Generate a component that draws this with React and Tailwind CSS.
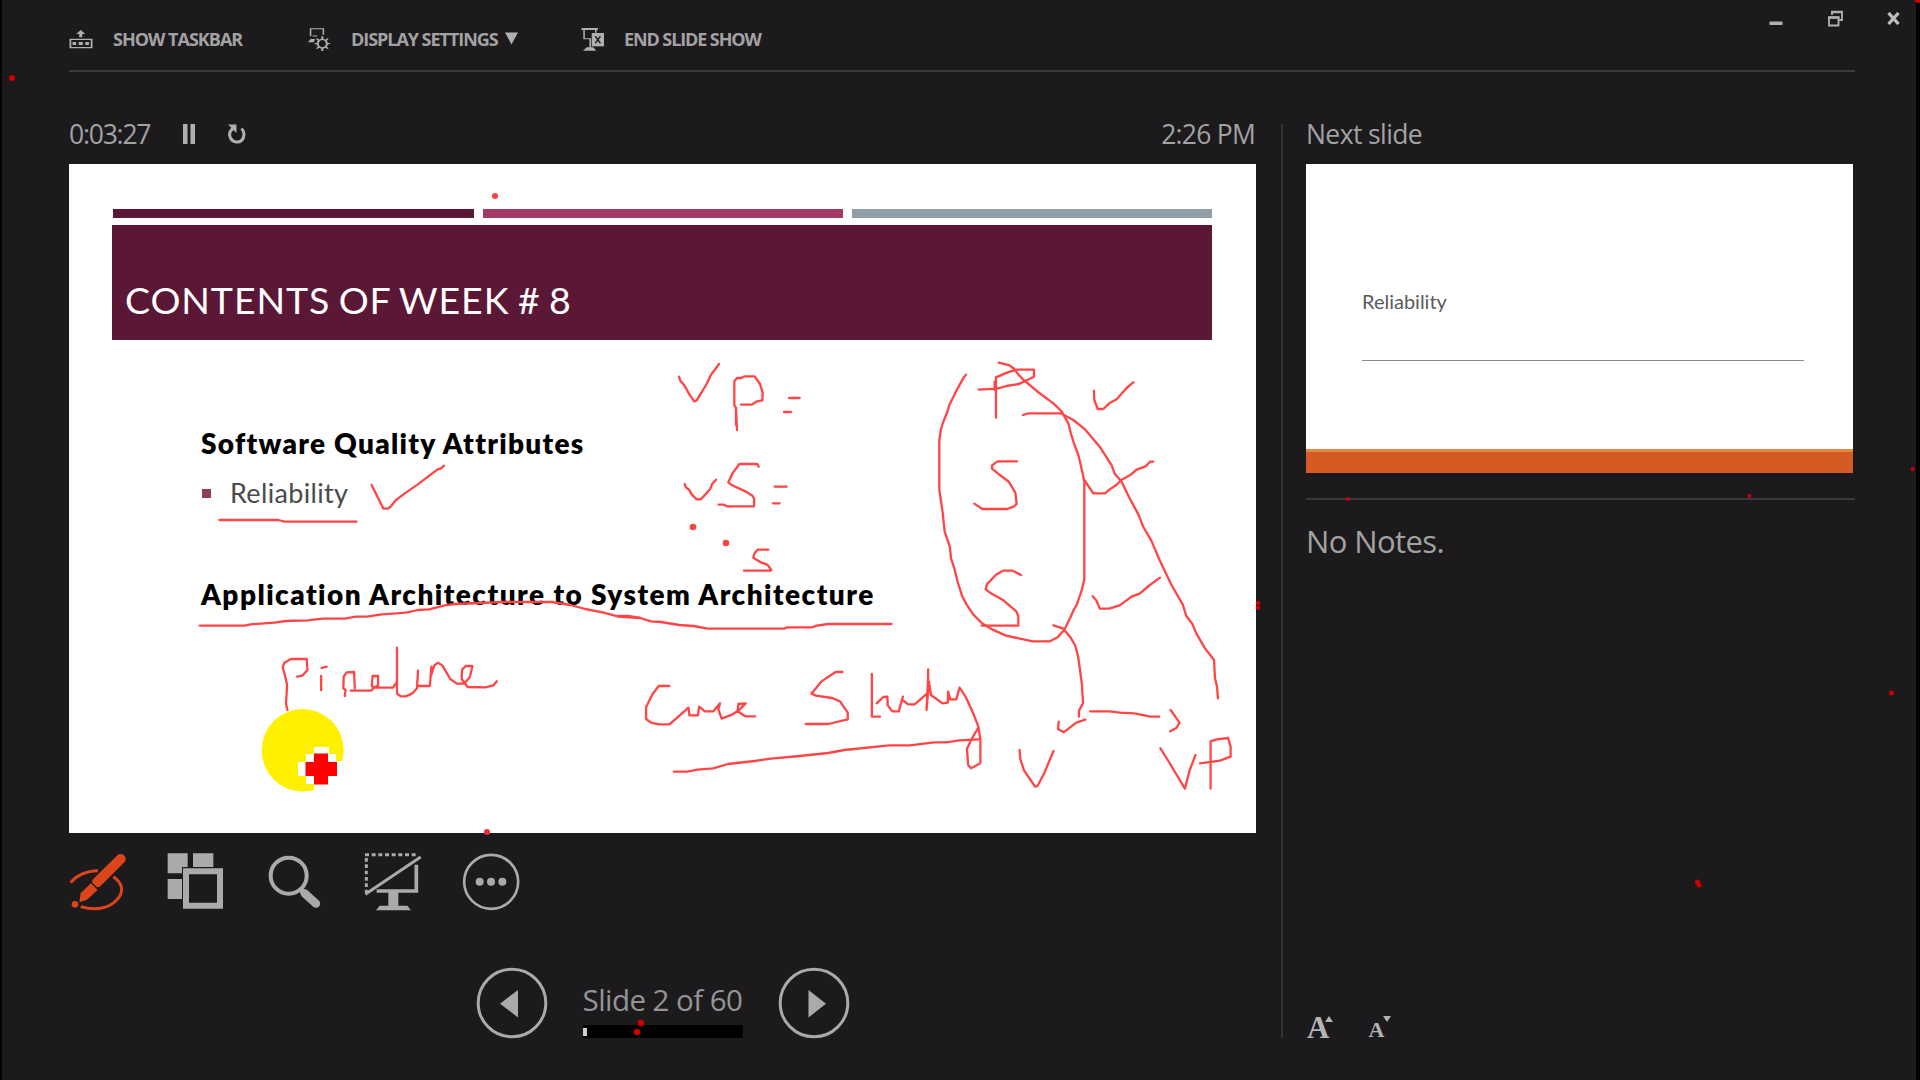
const RED = '#ff4545';

function Ink() {
  const g = {
    fill: 'none',
    stroke: RED,
    strokeWidth: 2.3,
    strokeLinecap: 'round',
    strokeLinejoin: 'round',
  };
  const v = { vectorEffect: 'non-scaling-stroke' };
  return (
    <svg className="pointer-events-none absolute left-0 top-0" width="1920" height="1080" viewBox="0 0 1920 1080">
      {/* tick and underline beside the first bullet */}
      <g {...g} transform="translate(60 160) scale(.39541 .33333)">
        <path {...v} d="M403 1080H552L568 1085H750M788 975L818 1046H828L836 1040L848 1022L872 1000L905 973L955 928L963 926L971 917" />
      </g>
      {/* centre column */}
      <g {...g} transform="translate(640 340) scale(.33333)">
        <path {...v} d="M117 110L121 122L133 136L150 166L163 184L170 181L181 163L200 132L213 104L221 94L237 72" />
        <path {...v} d="M303 194H335L351 184L367 181L368 158L360 132L344 109H314L304 114H291L283 124V196L288 203V255M288 203L291 270M447 174H479M432 216H453" />
        <path {...v} d="M134 432L138 442L148 450L155 463L170 478H182L190 470L211 446L216 433L228 419M356 380L352 372H298L277 401L265 427L275 435L316 454L338 468L343 478L342 499H260L252 494H236M404 440H440M399 490H419" />
        <path {...v} d="M385 629H353L344 639L340 653L362 667L382 674L394 690L392 692H312" />
      </g>
      {/* right column with the encircled letters */}
      <g {...g} transform="translate(900 340) scale(.33333)">
        <path {...v} d="M198 104L191 113L173 145L157 177L147 197L143 213L131 243L123 267L118 300V450L128 517L134 575L150 622L153 655L163 685L174 729L186 767L200 794L220 824L245 849L278 869L318 887L360 896L398 904H450L473 892L493 869L510 835L522 808L530 795L546 748L553 718V424L545 387L535 345L522 310L513 282L506 253L494 230L484 213L460 190L414 156L370 119L353 101L343 87L329 76L296 68" />
        <path {...v} d="M288 233V112L323 97L350 89H402V110L357 132L319 138L292 146L236 149M284 125V150" />
        <path {...v} d="M369 225L385 220H482L520 240L556 269L599 320L635 376L644 401L664 424L689 475L715 523L730 561L754 602L780 663L813 732L848 793L859 828L877 852L889 880L915 925L942 960L945 1015L951 1040L954 1075" />
        <path {...v} d="M582 153L583 180L593 207H610L628 190L650 178L680 144L700 127M553 420L580 460H615L628 449L649 435L664 420L691 405L710 389L737 379L750 365H760M578 769L588 780L600 806H628L659 796L695 770L720 760L746 738L780 713" />
        <path {...v} d="M351 364H293L276 376V386L297 403L327 426L346 458L350 492L341 500L321 507H247L223 491M363 705L338 692H309L288 704L261 733L257 748L273 760L310 781L349 814L355 829V857H245" />
        <path {...v} d="M460 856L490 866L510 890L525 915L534 948L540 990L546 1035L549 1090L537 1112V1130" />
      </g>
      {/* underline below the second heading and "Pipeline" */}
      <g {...g} transform="translate(60 560) scale(.36990 .33333)">
        <path {...v} d="M378 197H500L515 193L580 188L610 183L670 181L710 176H770L800 170H830L870 163L910 160L940 157L967 150L998 148L1040 136L1068 132L1200 126H1330L1380 135L1420 147L1470 158L1510 170L1566 174" />
        <path {...v} d="M615 450L611 432L614 375L608 345L602 322L606 309L624 297H667L669 330L655 347L641 350M707 324L721 320M706 348V391M770 408L772 390L766 385L767 350L775 337L795 336L797 385M786 392H842L847 384L860 376V348H845L843 378L850 383H900L908 370M911 263V400L921 409H935L953 400L965 385L968 332M968 378H1000L1004 320M1002 350L1012 316L1022 308L1034 317L1055 357L1073 371H1092L1108 352L1115 318H1097L1087 329L1086 357L1102 381L1150 382L1172 376L1181 364" />
      </g>
      {/* "Case Study", the arrows and the lower labels */}
      <g {...g} transform="translate(620 560) scale(.40816 .33333)">
        <path {...v} d="M-4 168H20L50 174L75 184L100 186L145 195L180 198L215 206H402L410 202H470L482 197L510 192H665" />
        <path {...v} d="M121 378H95L80 402L64 441V477L75 487L94 493H121L140 473L168 443L170 466H191L194 440L208 454H229L245 430L241 448L249 476L276 463L292 450L308 430L290 432L288 454L307 469H331" />
        <path {...v} d="M545 336H528L493 365L469 401L480 407L520 414L539 424L558 458V478L510 492H455M617 342V470H637M629 430L645 411L655 410L656 436L667 454H683L693 410M692 420L706 433H722L752 401M755 328V352L751 450L757 365L762 405L790 430L803 428L804 395L809 418H824L832 383L848 413L866 462L878 500L883 540V610L860 625L853 615L850 566L862 536L878 503" />
        <path {...v} d="M132 635H165L190 629L228 625L265 612L330 603L370 596L440 588L510 579L550 570L660 556H710L770 547H800L830 541L878 538" />
        <path {...v} d="M1152 454H1200L1225 458L1260 460L1300 470H1321M1349 450L1371 488L1363 504L1348 514M1075 485L1073 507L1087 517L1118 488L1140 479M979 570L981 598L990 632L1006 660L1017 680L1023 678L1040 638L1062 573M1324 565L1345 606L1384 686L1396 630L1410 585M1447 686V544L1462 538L1490 534L1496 560V590L1470 602L1421 610" />
      </g>
    </svg>
  );
}

const DOTS = [
  [12, 78, 6, '#cc0000'], [495, 196, 6, '#ff4040'], [693, 527, 6.5, '#ff4040'], [726, 543, 6.5, '#ff4040'],
  [487, 832, 6, '#f03030'], [641, 1023, 6.5, '#cc0000'], [637, 1032, 6.5, '#cc0000'],
  [1348, 499, 4, '#cc0000'], [1749.5, 496, 4, '#cc0000'], [1912.8, 469, 4, '#cc0000'],
  [1258, 603, 4.5, '#cc0000'], [1258, 607.5, 4.5, '#cc0000'], [1891.5, 693, 5, '#cc0000'],
  [1697.4, 882, 5, '#cc0000'], [1699, 885, 5, '#cc0000'], [1918, 0, 6, '#cc0000'],
];

function Dots() {
  return (
    <svg className="pointer-events-none absolute left-0 top-0" width="1920" height="1080" viewBox="0 0 1920 1080">
      {DOTS.map(([x, y, d, c]) => (
        <circle key={`${x}-${y}`} cx={x} cy={y} r={d / 2} fill={c} />
      ))}
    </svg>
  );
}

function Pointer() {
  return (
    <svg className="absolute left-[192px] top-[544px]" width="86" height="86" viewBox="261 708 86 86">
      <ellipse cx="302.7" cy="750.3" rx="41" ry="41.3" fill="#fff000" />
      <path fill="#fff" d="M314 747H329V754H336V761H346V793H314V784H306V776H298V762H306V754H314Z" />
      <path fill="#f00" d="M314 753.5H328V762H337V776H328V784.5H314V776H305.500V762H314Z" />
    </svg>
  );
}

function TopBar() {
  return (
    <header className="flex h-[72px] w-[1786px] items-center border-b-2 border-[#3b393c] pt-[7px] text-[18px] font-bold leading-6 text-[#a3a2a3] whitespace-nowrap">
      <div className="flex w-[238px] items-center gap-[20px]">
        <svg width="24" height="24" viewBox="135 81 47 72" preserveAspectRatio="none" fill="#b0afb0">
          <path d="M158 90L167 102H161V112H155V102H149Z" />
          <path fillRule="evenodd" d="M136 116H181V145H136ZM139.500 120V141H177.500V120Z" />
          <path d="M142 126h7v9h-7zM154 126h8v9h-8zM167 126h7v9h-7z" />
        </svg>
        <span className="tracking-[-1px]">SHOW TASKBAR</span>
      </div>
      <div className="flex w-[274px] items-center">
        <svg width="24" height="24" viewBox="602 81 47 72" preserveAspectRatio="none" fill="none" stroke="#b0afb0">
          <path d="M609 109V86H634V104M622 108H613" strokeWidth="3" />
          <path d="M604 127L609 117H618L615 127Z" fill="#b0afb0" stroke="none" />
          <ellipse cx="632" cy="131" rx="9" ry="13" strokeWidth="4" />
          <path d="M632 109V118M632 144V153M617 131H623M641 131H647M621 116L626 122M638 140L643 146M643 116L638 122M626 140L621 146" strokeWidth="4" />
        </svg>
        <span className="ml-5 w-[154px] tracking-[-1.05px]">DISPLAY SETTINGS</span>
        <svg width="13" height="13" viewBox="0 0 13 13" fill="#b0afb0"><path d="M0 0.500H13L6.500 12.500Z" /></svg>
      </div>
      <div className="flex items-center gap-[19px]">
        <svg width="24" height="24" viewBox="1138 81 47 72" preserveAspectRatio="none" fill="#b0afb0">
          <path d="M1139 84H1171V90H1139Z" />
          <path d="M1144 90V116H1156V143M1167 90V98" fill="none" stroke="#b0afb0" strokeWidth="3" />
          <path d="M1159 99H1183V139H1159Z" />
          <path d="M1166 109L1176 130M1176 109L1166 130" stroke="#1c1a1d" strokeWidth="3" />
          <path d="M1142 152L1149 142H1162L1168 152Z" />
        </svg>
        <span className="tracking-[-1.1px]">END SLIDE SHOW</span>
      </div>
    </header>
  );
}

function WindowButtons() {
  return (
    <div className="absolute right-[20px] top-[10px] flex items-center gap-[43.500px]">
      <svg width="14" height="16" viewBox="0 0 14 16"><path d="M0.500 10.500H13.500V14H0.500Z" fill="#b0afb0" /></svg>
      <svg width="17" height="17" viewBox="0 0 17 17" fill="none" stroke="#b0afb0">
        <path d="M5 5V2H15V10H12" strokeWidth="1.8" /><path d="M4 2H16" strokeWidth="2.500" />
        <path d="M2 7.500H11.500V15.500H2Z" strokeWidth="1.8" /><path d="M1 7.500H12.500" strokeWidth="2.500" />
      </svg>
      <svg width="13" height="13" viewBox="0 0 13 13"><path d="M1.500 1L11.500 12M11.500 1L1.500 12" stroke="#bdbcbd" strokeWidth="3.300" /></svg>
    </div>
  );
}

function Slide() {
  return (
    <div className="relative flex h-[669px] w-[1187px] flex-col bg-white pl-[43px] pt-[45px] font-[Lato,sans-serif]">
      <div className="flex w-[1100px] justify-between pl-px">
        <div className="h-[9px] w-[361px] bg-[#5b1736]" />
        <div className="h-[9px] w-[360px] bg-[#a23a68]" />
        <div className="h-[9px] w-[360px] bg-[#919ea8]" />
      </div>
      <div className="mt-[7px] flex h-[115px] w-[1100px] items-end bg-[#5b1736] pb-[15px] pl-[13px]">
        <h1 className="whitespace-nowrap text-[37.5px] leading-[50px] tracking-[0.9px] text-white [word-spacing:-2px]">CONTENTS OF WEEK # 8</h1>
      </div>
      <h2 className="ml-[89px] mt-[83px] whitespace-nowrap text-[28px] font-extrabold leading-10 tracking-[1.28px] text-black">Software Quality Attributes</h2>
      <div className="ml-[90px] mt-[10px] flex items-center">
        <span className="h-[9px] w-[9px] bg-[#8b3d5e]" />
        <span className="ml-[19px] whitespace-nowrap text-[27px] leading-10 tracking-[0.33px] text-[#4a4a4a]">Reliability</span>
      </div>
      <h2 className="ml-[89px] mt-[61px] whitespace-nowrap text-[28px] font-extrabold leading-10 tracking-[1.45px] text-black">Application Architecture to System Architecture</h2>
      <Pointer />
    </div>
  );
}

function ToolIcons() {
  return (
    <div className="mt-[19px] flex h-[60px] items-start">
      <svg width="60" height="60" viewBox="57 66 180 180" fill="none" stroke="#dc4519">
        <path d="M62 158C78 138 108 122 144 122M190 140C220 160 222 188 200 210C178 234 138 244 92 230" strokeWidth="9" />
        <path d="M141 157L212 87" strokeWidth="30" strokeLinecap="round" />
        <path d="M124 158L145 178L110 210L88 217L92 190Z" fill="#dc4519" stroke="none" />
        <path d="M119 153L150 184" stroke="#1c1a1d" strokeWidth="4" />
        <circle cx="75" cy="223" r="10" fill="#dc4519" stroke="none" />
      </svg>
      <svg className="ml-[38px]" width="60" height="60" viewBox="351 66 180 180" fill="#aba9ab">
        <path d="M353 70H413V130H353ZM429 70H490V130H429ZM353 147H413V207H353Z" />
        <path d="M396 111H522V240H396Z" fill="#1c1a1d" />
        <path fillRule="evenodd" d="M399 115H519V236H399ZM417 133V218H501V133Z" />
      </svg>
      <svg className="ml-[40px]" width="60" height="60" viewBox="651 66 180 180" fill="none" stroke="#aba9ab">
        <circle cx="716" cy="137" r="54" strokeWidth="12" />
        <path d="M750 176L764 190" strokeWidth="17" />
        <path d="M764 190L798 221" strokeWidth="25" strokeLinecap="round" />
      </svg>
      <svg className="ml-[37px]" width="60" height="60" viewBox="942 66 180 180" fill="none" stroke="#aba9ab">
        <path d="M945 74H1100" strokeWidth="9" strokeDasharray="12 8" />
        <path d="M949 84V188" strokeWidth="9" strokeDasharray="11 8" />
        <path d="M946 193L1112 81" strokeWidth="9" />
        <path d="M1099 104V183H980" strokeWidth="11" />
        <path d="M1015 186H1045V227H1072L1083 241H978L989 227H1015Z" fill="#aba9ab" stroke="none" />
      </svg>
      <svg className="ml-[38px]" width="60" height="60" viewBox="1236 66 180 180" fill="#aba9ab">
        <circle cx="1323.500" cy="155.500" r="81" fill="none" stroke="#aba9ab" strokeWidth="8" />
        <circle cx="1289" cy="155" r="12" /><circle cx="1323" cy="155" r="12" /><circle cx="1357" cy="155" r="12" />
      </svg>
    </div>
  );
}

function NavButton({ next }) {
  return (
    <svg width="72" height="72" viewBox="0 0 72 72">
      <circle cx="36" cy="36" r="33.8" fill="none" stroke="#aba9ab" strokeWidth="3" />
      <path d={next ? 'M30.500 23V50.500L48 36.700Z' : 'M42 23V50.500L24 36.700Z'} fill="#aba9ab" />
    </svg>
  );
}

function Navigation() {
  return (
    <nav className="mt-[55px] flex justify-center">
      <NavButton />
      <div className="ml-[35px] mr-[35px] flex w-[160px] flex-col">
        <span className="mt-[12px] whitespace-nowrap text-[29.5px] leading-[42px] tracking-[-0.55px] text-[#959495]">Slide 2 of 60</span>
        <div className="mt-[4px] flex h-[13px] items-center bg-black">
          <div className="h-[8px] w-[4px] bg-[#d0d0d0]" />
        </div>
      </div>
      <NavButton next />
    </nav>
  );
}

export default function App() {
  return (
    <div className="relative h-[1080px] w-[1920px] overflow-hidden bg-black pl-[2px] font-['Open_Sans',sans-serif] text-[#a3a2a3]">
      <div className="flex h-full w-[1914px] flex-col bg-[#1c1a1d] pl-[67px]">
        <TopBar />
        <div className="flex">
          <main className="w-[1187px] pt-[32px]">
            <div className="flex h-[60px] items-center justify-between whitespace-nowrap text-[26.5px] leading-[36px]">
              <div className="flex items-center">
                <span className="w-[114px] tracking-[-1.2px]">0:03:27</span>
                <svg width="12" height="20" viewBox="0 0 12 20" fill="#b0afb0"><path d="M0 0H4.500V20H0ZM7.500 0H12V20H7.500Z" /></svg>
                <svg className="ml-[32px]" width="20" height="22" viewBox="0 0 20 22" fill="none" stroke="#b0afb0">
                  <path d="M14.500 5.500C18 9 17.500 15 14.500 17.500C11 20.500 5.500 19 3.500 15C2 12 2.500 8 6.500 5" strokeWidth="3" />
                  <path d="M1 1.500H9.500V10Z" fill="#b0afb0" stroke="none" />
                </svg>
              </div>
              <span className="mr-px tracking-[-0.75px]">2:26 PM</span>
            </div>
            <Slide />
            <ToolIcons />
            <Navigation />
          </main>
          <div className="ml-[25px] mt-[52px] h-[914px] w-[2px] bg-[#343235]" />
          <aside className="ml-[23px] flex h-[1008px] w-[549px] flex-col pt-[32px]">
            <div className="flex h-[60px] items-center text-[26.5px] leading-[36px]">
              <span className="whitespace-nowrap tracking-[-0.6px]">Next slide</span>
            </div>
            <div className="flex h-[309px] w-[547px] flex-col bg-white">
              <span className="ml-[56px] mt-[121px] text-[20px] font-[Lato,sans-serif] leading-8 text-[#5a5a5a]">Reliability</span>
              <div className="ml-[56px] mt-[43px] h-px w-[442px] bg-[#8a8a8a]" />
              <div className="mt-auto h-[24px] border-t-[3px] border-[#e0893f] bg-[#d65a24]" />
            </div>
            <div className="mt-[25px] h-[2px] w-[549px] bg-[#3b393c]" />
            <p className="mt-[20px] whitespace-nowrap text-[31px] leading-[42px] tracking-[-0.6px]">No Notes.</p>
            <div className="mt-auto flex items-end pb-[36px] font-['Liberation_Serif',serif] font-bold text-[#b5b4b5]">
              <span className="ml-[1px] text-[31px] leading-[32px]">A</span>
              <svg className="-ml-[4px] mb-[22px]" width="8" height="6" viewBox="0 0 8 6" fill="#b5b4b5"><path d="M4 0L8 6H0Z" /></svg>
              <span className="ml-[35px] text-[22px] leading-[29px]">A</span>
              <svg className="-ml-px mb-[22px]" width="8" height="6" viewBox="0 0 8 6" fill="#b5b4b5"><path d="M0 0H8L4 6Z" /></svg>
            </div>
          </aside>
        </div>
      </div>
      <WindowButtons />
      <Ink />
      <Dots />
    </div>
  );
}
